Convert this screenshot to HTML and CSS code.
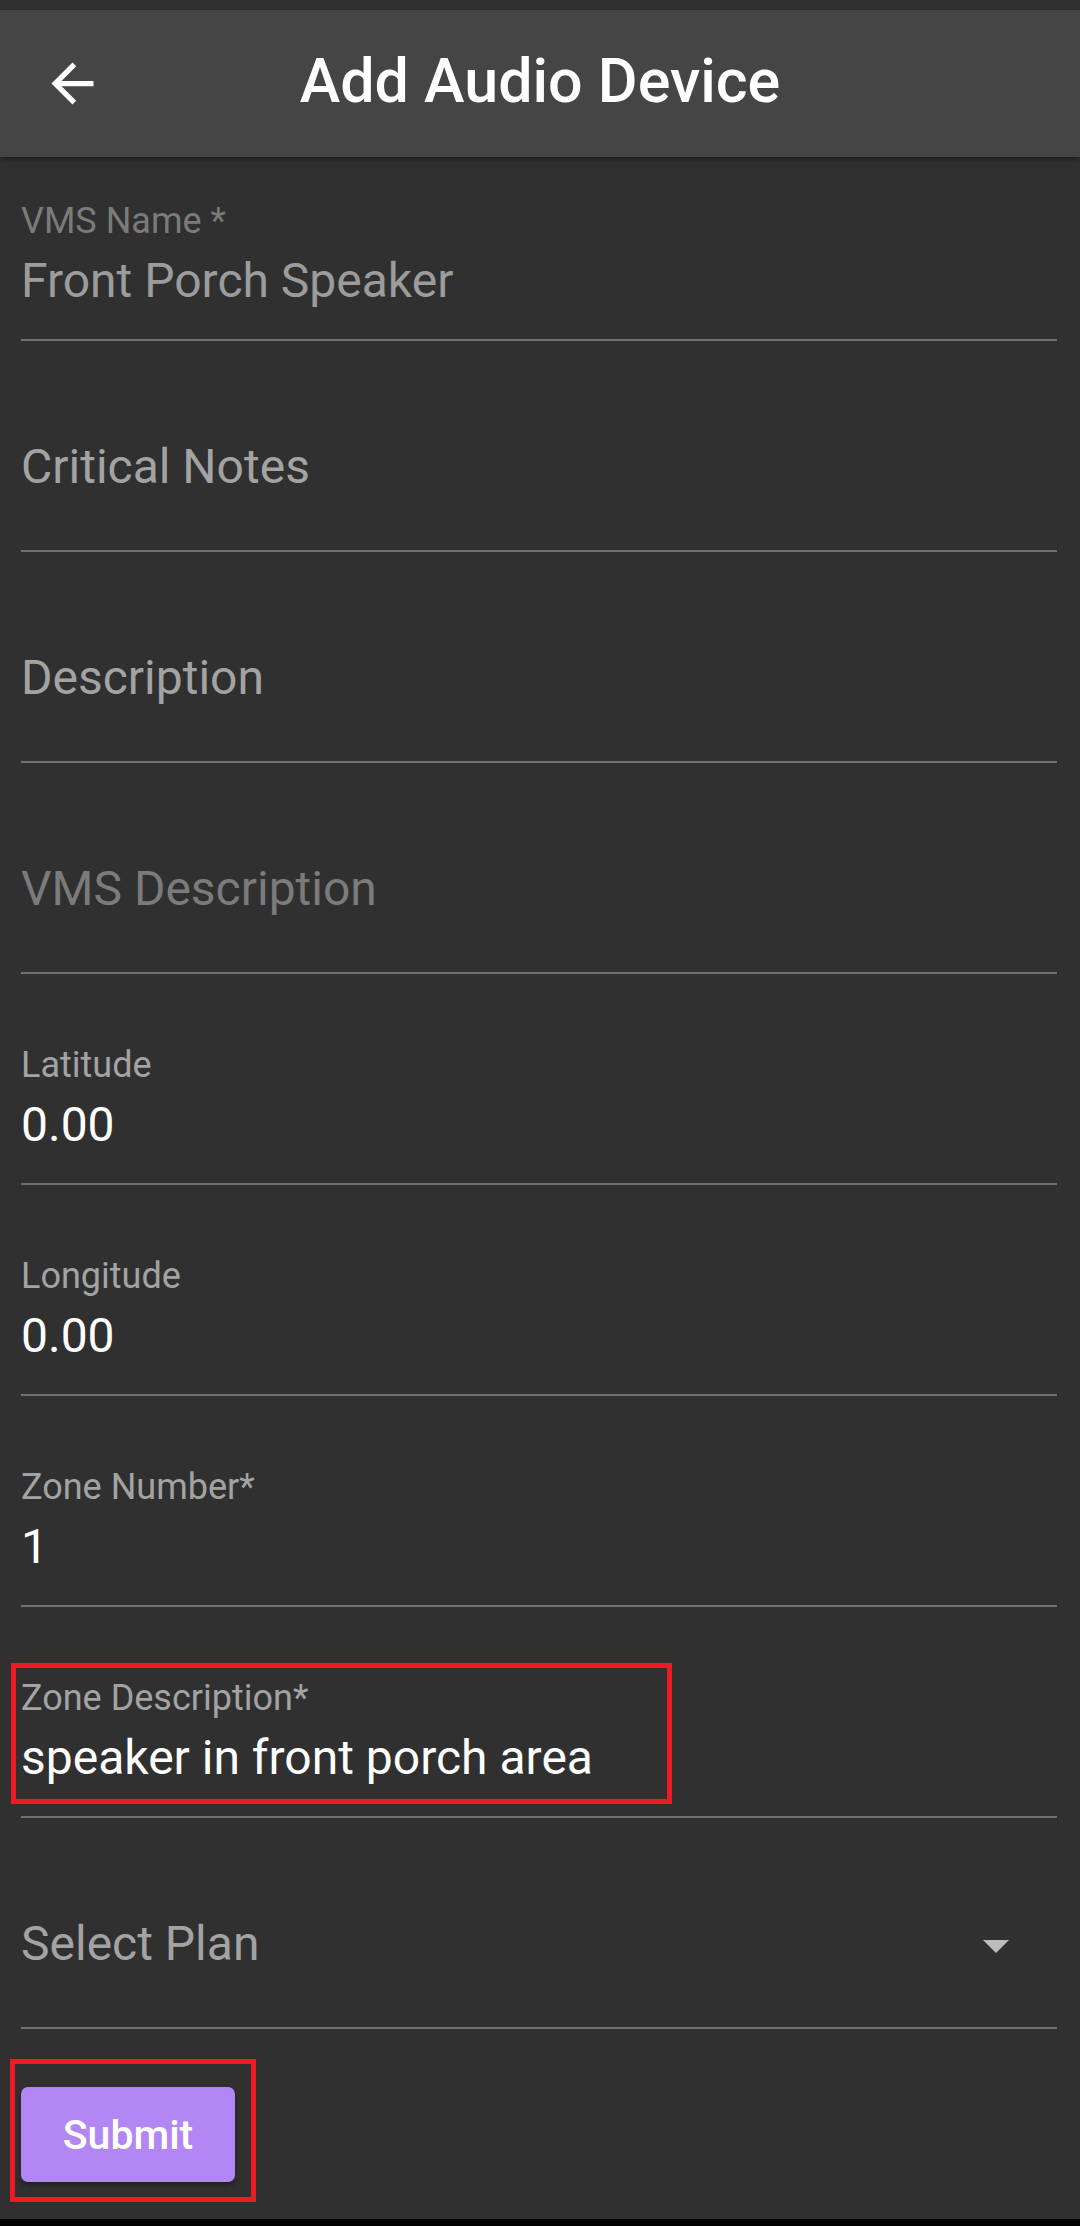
FILE: index.html
```html
<!DOCTYPE html>
<html lang="en">
<head>
<meta charset="utf-8">
<title>Add Audio Device</title>
<link rel="stylesheet" href="styles.css">
</head>
<body>
<div class="screen">
  <div class="statusbar"></div>
  <header class="appbar">
    <div class="appbar-lead">
      <svg class="back-icon" viewBox="0 0 24 24" aria-hidden="true"><path d="M20 11H7.83l5.59-5.59L12 4l-8 8 8 8 1.41-1.41L7.83 13H20v-2z"/></svg>
    </div>
    <h1 class="appbar-title">Add Audio Device</h1>
    <div></div>
  </header>
  <main class="form">
    <div class="field">
      <div class="label label-disabled">VMS Name *</div>
      <div class="value value-disabled">Front Porch Speaker</div>
    </div>
    <div class="field field-empty">
      <div class="placeholder">Critical Notes</div>
    </div>
    <div class="field field-empty">
      <div class="placeholder">Description</div>
    </div>
    <div class="field field-empty">
      <div class="placeholder placeholder-disabled">VMS Description</div>
    </div>
    <div class="field">
      <div class="label">Latitude</div>
      <div class="value">0.00</div>
    </div>
    <div class="field">
      <div class="label">Longitude</div>
      <div class="value">0.00</div>
    </div>
    <div class="field">
      <div class="label">Zone Number*</div>
      <div class="value">1</div>
    </div>
    <div class="field">
      <div class="label">Zone Description*</div>
      <div class="value">speaker in front porch area</div>
      <div class="highlight highlight-zone"></div>
    </div>
    <div class="field field-empty field-select">
      <div class="placeholder">Select Plan</div>
      <span class="dropdown-arrow"></span>
    </div>
    <div class="submit-row">
      <button class="submit-btn">Submit</button>
      <div class="highlight highlight-submit"></div>
    </div>
  </main>
  <div class="navbar"></div>
</div>
</body>
</html>
```
FILE: styles.css
```css
* { box-sizing: border-box; }
html, body { margin: 0; padding: 0; }
body {
  background: #303030;
  font-family: Roboto, "Noto Sans", "Liberation Sans", sans-serif;
  color: #fff;
}
.screen {
  width: 1080px;
  height: 2226px;
  display: flex;
  flex-direction: column;
  background: #303030;
  overflow: hidden;
}
.statusbar {
  height: 10px;
  background: #323232;
  flex: none;
}
.appbar {
  height: 147px;
  flex: none;
  background: #454545;
  display: grid;
  grid-template-columns: 1fr auto 1fr;
  align-items: center;
  box-shadow: 0 2px 5px rgba(0,0,0,0.45);
  position: relative;
  z-index: 1;
}
.appbar-lead {
  padding-left: 41px;
  display: flex;
  align-items: center;
}
.back-icon {
  width: 63px;
  height: 63px;
  fill: #fff;
  display: block;
}
.appbar-title {
  margin: 0;
  font-size: 61px;
  font-weight: 500;
  color: #fff;
  line-height: 1.172;
  padding-bottom: 4px;
}
.form {
  flex: 1;
  padding: 0 23px 0 21px;
  display: flex;
  flex-direction: column;
  gap: 27px;
}
.field {
  position: relative;
  height: 184px;
  padding-top: 46px;
  border-bottom: 2px solid #707070;
  display: flex;
  flex-direction: column;
}
.label {
  font-size: 36px;
  line-height: 36px;
  height: 36px;
  color: #a3a3a3;
}
.label-disabled { color: #7b7b7b; }
.value {
  margin-top: 10px;
  font-size: 48px;
  line-height: 64px;
  height: 64px;
  color: #fff;
  white-space: nowrap;
}
.value-disabled { color: #9c9c9c; }
.field-empty { padding-top: 67px; }
.placeholder {
  font-size: 48px;
  line-height: 64px;
  height: 64px;
  color: #a3a3a3;
}
.placeholder-disabled { color: #7b7b7b; }
.field-select {
  flex-direction: row;
  justify-content: space-between;
}
.dropdown-arrow {
  margin-top: 28px;
  margin-right: 48px;
  width: 0;
  height: 0;
  border-left: 13px solid transparent;
  border-right: 13px solid transparent;
  border-top: 13px solid #bdbdbd;
}
.submit-row {
  position: relative;
  margin-top: 31px;
  align-self: flex-start;
}
.submit-btn {
  display: block;
  width: 214px;
  height: 95px;
  border: none;
  border-radius: 7px;
  background: #b287f3;
  color: #fff;
  font-family: Roboto, "Noto Sans", "Liberation Sans", sans-serif;
  font-size: 41px;
  font-weight: 500;
  padding: 0;
  box-shadow: 0 3px 4px rgba(0,0,0,0.35);
}
.highlight {
  position: absolute;
  border: 5px solid #ed1c24;
  pointer-events: none;
}
.highlight-zone {
  top: 29px;
  left: -10px;
  width: 661px;
  height: 141px;
}
.highlight-submit {
  top: -28px;
  left: -11px;
  width: 246px;
  height: 143px;
}
.navbar {
  height: 7px;
  flex: none;
  background: #000;
}
```
